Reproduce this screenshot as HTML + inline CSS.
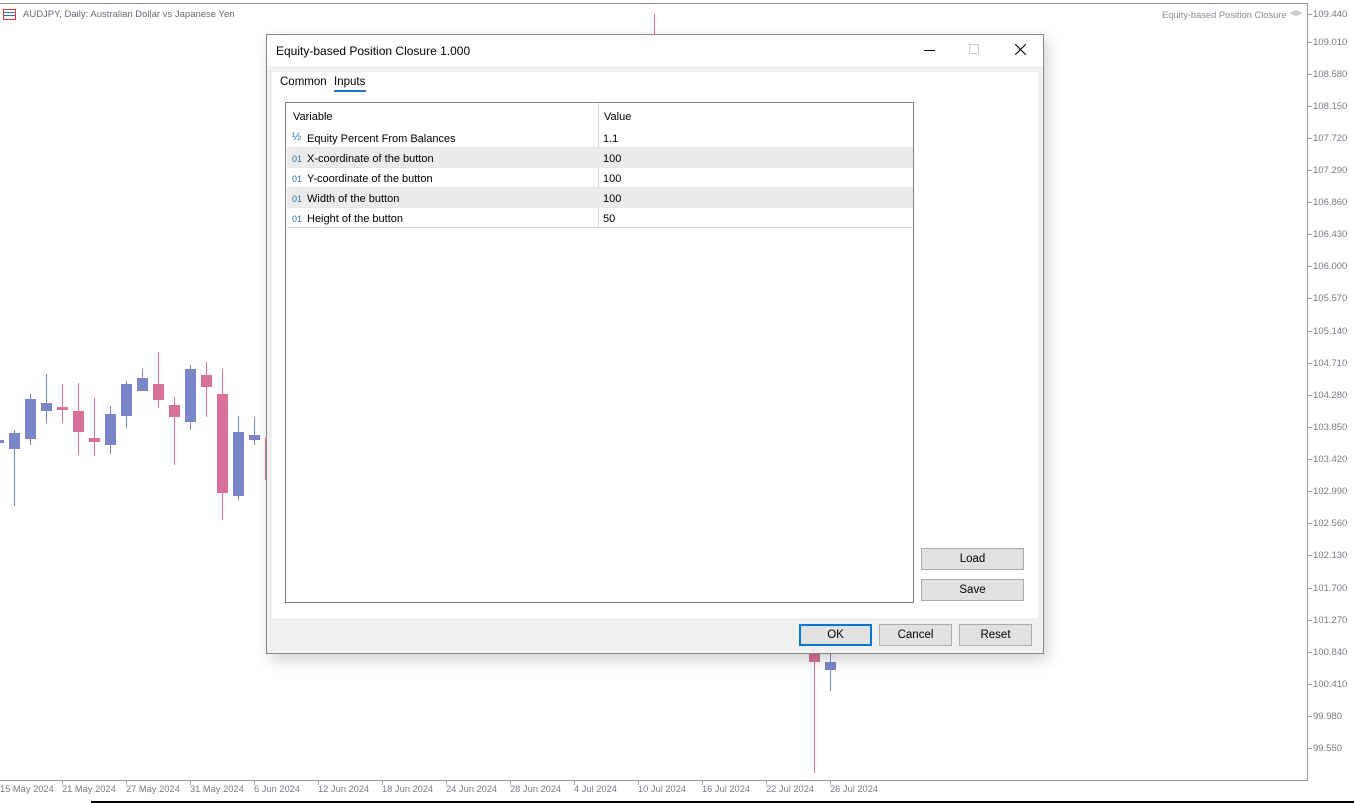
<!DOCTYPE html>
<html><head><meta charset="utf-8"><style>
*{margin:0;padding:0;box-sizing:border-box}
body{width:1354px;height:803px;position:relative;overflow:hidden;background:#fff;font-family:"Liberation Sans",sans-serif;}
.a{position:absolute}
.pl{position:absolute;left:1313px;font-size:9.5px;color:#7a7a8a;}
.tk{position:absolute;left:1307px;width:5px;height:1px;background:#9a9aaa}
.dl{position:absolute;top:784px;font-size:9.3px;color:#7a7a8a;white-space:nowrap}
.dt{position:absolute;top:780px;width:1px;height:5px;background:#9a9aaa}
.dlg{font-size:11.5px;color:#000}
.btn{position:absolute;background:#e1e1e1;border:1px solid #adadad;font-size:11.5px;text-align:center;line-height:21px}
.row{position:absolute;left:1px;width:626px;height:20px;font-size:11px;line-height:22px;border-bottom:1px solid #e6e6e6}
.row span{position:absolute}
.ic{color:#2a6db0;font-size:9px;left:5px}
</style></head><body>
<div class="a" style="left:0;top:3px;width:1308px;height:1px;background:#9a9aaa"></div>
<div class="a" style="left:1307px;top:3px;width:1px;height:778px;background:#9a9aaa"></div>
<div class="a" style="left:0;top:780px;width:1308px;height:1px;background:#9a9aaa"></div>
<div class="a" style="left:91px;top:801px;width:1263px;height:2px;background:#000"></div>
<div class="a" style="left:3px;top:9px;width:13px;height:11px;border:1px solid #d33;background:linear-gradient(#fff 0 2px,#3a6fc0 2px 3px,#fff 3px 5px,#3a6fc0 5px 6px,#fff 6px)"></div>
<div class="a" style="left:23px;top:9px;font-size:9.5px;color:#6a6a7a">AUDJPY, Daily:  Australian Dollar vs Japanese Yen</div>
<div class="a" style="left:1162px;top:10px;font-size:9.3px;color:#8a8a9a">Equity-based Position Closure</div>
<div class="a" style="left:1289px;top:10px;width:14px;height:9px;background:#ccc;clip-path:polygon(50% 0,100% 35%,50% 70%,0 35%)"></div>
<div class="pl" style="top:9px">109.440</div><div class="tk" style="top:14px"></div>
<div class="pl" style="top:37px">109.010</div><div class="tk" style="top:42px"></div>
<div class="pl" style="top:69px">108.580</div><div class="tk" style="top:74px"></div>
<div class="pl" style="top:101px">108.150</div><div class="tk" style="top:106px"></div>
<div class="pl" style="top:133px">107.720</div><div class="tk" style="top:138px"></div>
<div class="pl" style="top:165px">107.290</div><div class="tk" style="top:170px"></div>
<div class="pl" style="top:197px">106.860</div><div class="tk" style="top:202px"></div>
<div class="pl" style="top:229px">106.430</div><div class="tk" style="top:234px"></div>
<div class="pl" style="top:261px">106.000</div><div class="tk" style="top:266px"></div>
<div class="pl" style="top:293px">105.570</div><div class="tk" style="top:298px"></div>
<div class="pl" style="top:326px">105.140</div><div class="tk" style="top:331px"></div>
<div class="pl" style="top:358px">104.710</div><div class="tk" style="top:363px"></div>
<div class="pl" style="top:390px">104.280</div><div class="tk" style="top:395px"></div>
<div class="pl" style="top:422px">103.850</div><div class="tk" style="top:427px"></div>
<div class="pl" style="top:454px">103.420</div><div class="tk" style="top:459px"></div>
<div class="pl" style="top:486px">102.990</div><div class="tk" style="top:491px"></div>
<div class="pl" style="top:518px">102.560</div><div class="tk" style="top:523px"></div>
<div class="pl" style="top:550px">102.130</div><div class="tk" style="top:555px"></div>
<div class="pl" style="top:583px">101.700</div><div class="tk" style="top:588px"></div>
<div class="pl" style="top:615px">101.270</div><div class="tk" style="top:620px"></div>
<div class="pl" style="top:647px">100.840</div><div class="tk" style="top:652px"></div>
<div class="pl" style="top:679px">100.410</div><div class="tk" style="top:684px"></div>
<div class="pl" style="top:711px">99.980</div><div class="tk" style="top:716px"></div>
<div class="pl" style="top:743px">99.550</div><div class="tk" style="top:748px"></div>
<div class="dl" style="left:0">15 May 2024</div>
<div class="dt" style="left:62px"></div><div class="dl" style="left:62px">21 May 2024</div>
<div class="dt" style="left:126px"></div><div class="dl" style="left:126px">27 May 2024</div>
<div class="dt" style="left:190px"></div><div class="dl" style="left:190px">31 May 2024</div>
<div class="dt" style="left:254px"></div><div class="dl" style="left:254px">6 Jun 2024</div>
<div class="dt" style="left:318px"></div><div class="dl" style="left:318px">12 Jun 2024</div>
<div class="dt" style="left:382px"></div><div class="dl" style="left:382px">18 Jun 2024</div>
<div class="dt" style="left:446px"></div><div class="dl" style="left:446px">24 Jun 2024</div>
<div class="dt" style="left:510px"></div><div class="dl" style="left:510px">28 Jun 2024</div>
<div class="dt" style="left:574px"></div><div class="dl" style="left:574px">4 Jul 2024</div>
<div class="dt" style="left:638px"></div><div class="dl" style="left:638px">10 Jul 2024</div>
<div class="dt" style="left:702px"></div><div class="dl" style="left:702px">16 Jul 2024</div>
<div class="dt" style="left:766px"></div><div class="dl" style="left:766px">22 Jul 2024</div>
<div class="dt" style="left:830px"></div><div class="dl" style="left:830px">26 Jul 2024</div>
<svg class="a" style="left:0;top:0" width="1300" height="780">
<g stroke-width="1">
<rect x="0" y="440" width="4" height="3" fill="#7b86c8"/>
<line x1="14.5" y1="430" x2="14.5" y2="506" stroke="#7b86c8"/><rect x="9" y="433" width="11" height="16" fill="#7b86c8"/>
<line x1="30.5" y1="394" x2="30.5" y2="445" stroke="#7b86c8"/><rect x="25" y="399" width="11" height="40" fill="#7b86c8"/>
<line x1="46.5" y1="374" x2="46.5" y2="423" stroke="#7b86c8"/><rect x="41" y="403" width="11" height="8" fill="#7b86c8"/>
<line x1="62.5" y1="384" x2="62.5" y2="423" stroke="#d8709a"/><rect x="57" y="407" width="11" height="3" fill="#d8709a"/>
<line x1="78.5" y1="383" x2="78.5" y2="455" stroke="#d8709a"/><rect x="73" y="411" width="11" height="21" fill="#d8709a"/>
<line x1="94.5" y1="398" x2="94.5" y2="456" stroke="#d8709a"/><rect x="89" y="438" width="11" height="4" fill="#d8709a"/>
<line x1="110.5" y1="406" x2="110.5" y2="454" stroke="#7b86c8"/><rect x="105" y="414" width="11" height="31" fill="#7b86c8"/>
<line x1="126.5" y1="381" x2="126.5" y2="428" stroke="#7b86c8"/><rect x="121" y="384" width="11" height="32" fill="#7b86c8"/>
<line x1="142.5" y1="369" x2="142.5" y2="391" stroke="#7b86c8"/><rect x="137" y="378" width="11" height="13" fill="#7b86c8"/>
<line x1="158.5" y1="352" x2="158.5" y2="408" stroke="#d8709a"/><rect x="153" y="384" width="11" height="16" fill="#d8709a"/>
<line x1="174.5" y1="397" x2="174.5" y2="465" stroke="#d8709a"/><rect x="169" y="405" width="11" height="12" fill="#d8709a"/>
<line x1="190.5" y1="365" x2="190.5" y2="430" stroke="#7b86c8"/><rect x="185" y="369" width="11" height="53" fill="#7b86c8"/>
<line x1="206.5" y1="362" x2="206.5" y2="417" stroke="#d8709a"/><rect x="201" y="375" width="11" height="12" fill="#d8709a"/>
<line x1="222.5" y1="369" x2="222.5" y2="520" stroke="#d8709a"/><rect x="217" y="394" width="11" height="99" fill="#d8709a"/>
<line x1="238.5" y1="416" x2="238.5" y2="500" stroke="#7b86c8"/><rect x="233" y="432" width="11" height="64" fill="#7b86c8"/>
<line x1="254.5" y1="417" x2="254.5" y2="445" stroke="#7b86c8"/><rect x="249" y="435" width="11" height="5" fill="#7b86c8"/>
<rect x="265" y="438" width="2" height="42" fill="#d8709a"/>
<line x1="654.5" y1="14" x2="654.5" y2="35" stroke="#d8709a"/>
<line x1="814.5" y1="652" x2="814.5" y2="773" stroke="#d8709a"/><rect x="809" y="652" width="11" height="10" fill="#d8709a"/>
<line x1="830.5" y1="654" x2="830.5" y2="691" stroke="#7b86c8"/><rect x="825" y="662" width="11" height="8" fill="#7b86c8"/>
</g></svg>
<div class="a dlg" style="left:266px;top:34px;width:778px;height:620px;background:#f0f0f0;border:1px solid #888;box-shadow:4px 6px 14px rgba(0,0,0,.18)">
 <div class="a" style="left:0;top:0;width:776px;height:31px;background:#fff"></div>
 <div class="a" style="left:9px;top:9px;font-size:12px">Equity-based Position Closure 1.000</div>
 <div class="a" style="left:657px;top:15px;width:11px;height:1px;background:#000"></div>
 <div class="a" style="left:702px;top:9px;width:10px;height:10px;border:1px solid #ccc"></div>
 <svg class="a" style="left:748px;top:9px" width="11" height="11"><path d="M0 0L11 11M11 0L0 11" stroke="#000" stroke-width="1.1"/></svg>
 <div class="a" style="left:5px;top:37px;width:766px;height:546px;background:#fff"></div>
 <div class="a" style="left:13px;top:41px">Common</div>
 <div class="a" style="left:67px;top:41px">Inputs</div>
 <div class="a" style="left:67px;top:55px;width:32px;height:2px;background:#1e78c8"></div>
 <div class="a" style="left:18px;top:67px;width:629px;height:501px;border:1px solid #828282;background:#fff">
  <div class="a" style="left:312px;top:0;width:1px;height:124px;background:#d6d6d6"></div>
  <div class="row" style="top:3px;border:none"><span style="left:6px">Variable</span><span style="left:317px">Value</span></div>
  <div class="row" style="top:25px"><span class="ic" style="font-size:11px;top:-2px">½</span><span style="left:20px">Equity Percent From Balances</span><span style="left:316px">1.1</span></div>
  <div class="row" style="top:45px;background:#ebebeb"><span class="ic">01</span><span style="left:20px">X-coordinate of the button</span><span style="left:316px">100</span></div>
  <div class="row" style="top:65px"><span class="ic">01</span><span style="left:20px">Y-coordinate of the button</span><span style="left:316px">100</span></div>
  <div class="row" style="top:85px;background:#ebebeb"><span class="ic">01</span><span style="left:20px">Width of the button</span><span style="left:316px">100</span></div>
  <div class="row" style="top:105px;border-bottom:1px solid #d6d6d6"><span class="ic">01</span><span style="left:20px">Height of the button</span><span style="left:316px">50</span></div>
 </div>
 <div class="btn" style="left:654px;top:513px;width:103px;height:22px">Load</div>
 <div class="btn" style="left:654px;top:544px;width:103px;height:22px">Save</div>
 <div class="btn" style="left:532px;top:589px;width:73px;height:22px;border:2px solid #0078d7;line-height:19px">OK</div>
 <div class="btn" style="left:612px;top:589px;width:73px;height:22px">Cancel</div>
 <div class="btn" style="left:692px;top:589px;width:73px;height:22px">Reset</div>
</div>
</body></html>
